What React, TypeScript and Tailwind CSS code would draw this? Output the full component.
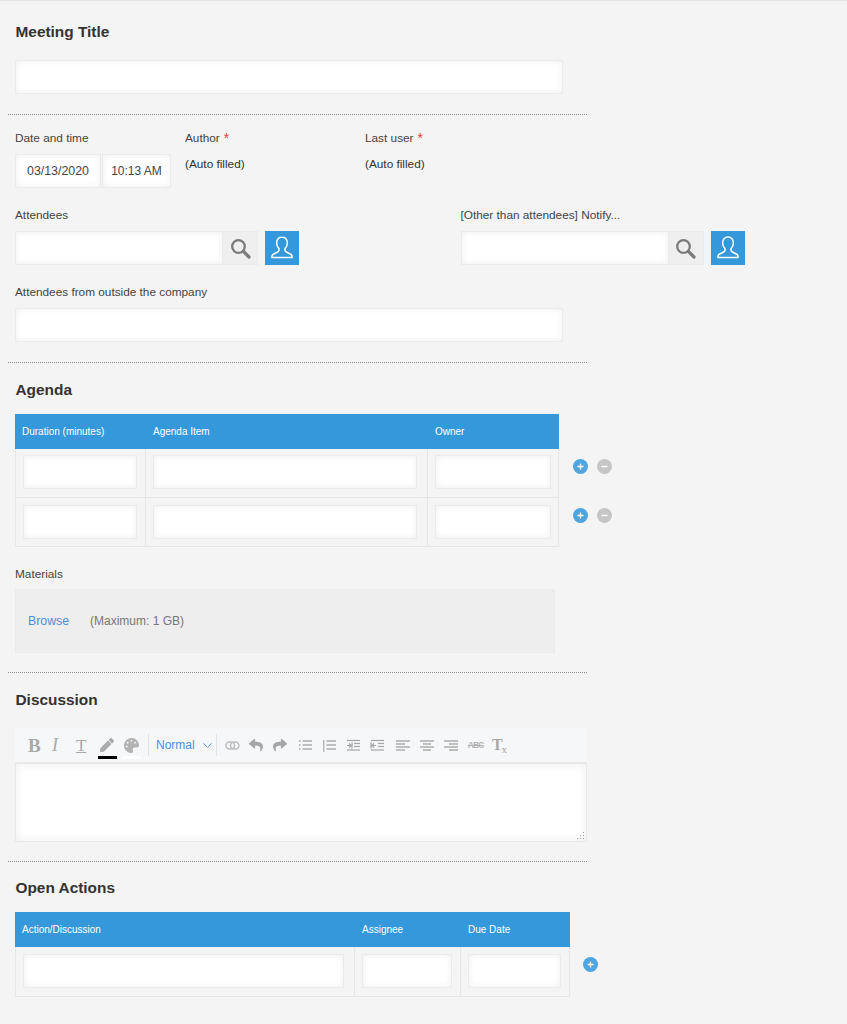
import React from "react";
import { FaPen, FaPalette, FaReply, FaShare, FaPlus, FaMinus } from "react-icons/fa";
import { ChevronDown } from "lucide-react";

const inputBox = "bg-white border border-[#ebebeb] shadow-[inset_0_0_6px_rgba(0,0,0,0.07)]";

const Divider = () => <div className="ml-2 w-[579px] border-t border-dotted border-[#8f8f8f]" />;

const Heading = ({ children, className }: { children: React.ReactNode; className: string }) => (
  <h2 className={`text-[15.4px] leading-[18px] font-bold text-[#333] ${className}`}>{children}</h2>
);

const Label = ({ children, required }: { children: React.ReactNode; required?: boolean }) => (
  <div className="text-[11.8px] leading-[16px] text-[#444]">
    {children}
    {required && <span className="ml-1 align-[-1px] text-[14px] leading-none text-[#ee3b3b]">*</span>}
  </div>
);

const UserButton = () => (
  <div className="ml-[7px] flex h-[34px] w-[34px] items-center justify-center bg-[#3498db]">
    <svg width="26" height="26" viewBox="0 0 26 26" fill="none" stroke="white" strokeWidth="1.5" strokeLinejoin="round">
      <path d="M13 2c-3.400 0-5.400 2.600-5.400 6 0 2.400 1 4.400 2.400 5.600v2.200c0 1-3.600 2-6 3.600-1 .7-1.200 1.800-1.200 3h20.400c0-1.200-.2-2.300-1.200-3-2.400-1.600-6-2.600-6-3.600v-2.200c1.400-1.200 2.400-3.200 2.400-5.600 0-3.400-2-6-5.400-6z" />
    </svg>
  </div>
);

const UserPicker = () => (
  <div className="flex h-[34px]">
    <div className={`${inputBox} h-full w-[208px]`} />
    <div className="flex h-full w-[35px] items-center justify-center border border-l-0 border-[#ebebeb] bg-[#efefef]">
      <svg width="21" height="21" viewBox="0 0 21 21" fill="none" stroke="#7b7b7b">
        <circle cx="8.500" cy="8.500" r="6.300" strokeWidth="2.300" />
        <line x1="13.500" y1="13.500" x2="19" y2="19" strokeWidth="3.200" strokeLinecap="round" />
      </svg>
    </div>
    <UserButton />
  </div>
);

const RoundButton = ({ kind }: { kind: "add" | "remove" }) => (
  <div
    className={`flex h-[15px] w-[15px] items-center justify-center rounded-full text-white ${
      kind === "add" ? "bg-[#4da6e2]" : "bg-[#c6c6c6]"
    }`}
  >
    {kind === "add" ? <FaPlus size={7} /> : <FaMinus size={7} />}
  </div>
);

const HeaderCell = ({ width, children }: { width: string; children: React.ReactNode }) => (
  <div className={`${width} pl-[7px] text-[10px] leading-[35px] text-white`}>{children}</div>
);

const FieldCell = ({ width, field, top, last }: { width: string; field: string; top?: string; last?: boolean }) => (
  <div className={`${width} ${top ?? "pt-[7px]"} h-full shrink-0 pl-[7px] ${last ? "" : "border-r border-[#e6e6e6]"}`}>
    <div className={`${inputBox} ${field} h-[34px]`} />
  </div>
);

const LineIcon = ({ lines }: { lines: number[][] }) => (
  <svg width="15" height="13" viewBox="0 0 15 13" stroke="#a6a6a6" strokeWidth="1.4">
    {lines.map(([x1, x2, y], i) => (
      <line key={i} x1={x1} x2={x2} y1={y} y2={y} />
    ))}
  </svg>
);

const IndentIcon = ({ out }: { out?: boolean }) => (
  <svg width="15" height="13" viewBox="0 0 15 13" stroke="#a6a6a6" strokeWidth="1.200" fill="none">
    <line x1="1" x2="14" y1="1.500" y2="1.500" />
    <line x1="8" x2="14" y1="4.500" y2="4.500" />
    <line x1="8" x2="14" y1="7.500" y2="7.500" />
    <line x1="1" x2="14" y1="11" y2="11" />
    {out ? <path d="M1 3.500v6M6 6.500H2M4 4.500l-2 2 2 2" /> : <path d="M6 3.500v6M1 6.500h4M3 4.500l2 2-2 2" />}
  </svg>
);

const ListIcon = ({ numbered }: { numbered?: boolean }) => (
  <svg width="15" height="13" viewBox="0 0 15 13" stroke="#a6a6a6" strokeWidth="1.400">
    {[2, 6, 10].map((y) => (
      <g key={y}>
        <line x1="4.500" x2="14" y1={y} y2={y} />
        <line x1="1" x2="2.500" y1={y} y2={y} />
        {numbered && <line x1="1" x2="2.500" y1={y + 2} y2={y + 2} />}
      </g>
    ))}
  </svg>
);

const LinkIcon = () => (
  <svg width="15" height="11" viewBox="0 0 15 11" fill="none" stroke="#bdbdbd" strokeWidth="1.500">
    <rect x="1" y="2" width="8.500" height="7" rx="3.500" />
    <rect x="5.500" y="2" width="8.500" height="7" rx="3.500" />
  </svg>
);

const ToolSlot = ({ children }: { children: React.ReactNode }) => (
  <div className="flex w-[24.300px] shrink-0 items-center">{children}</div>
);

const Toolbar = () => (
  <div className="flex h-[35px] items-center border-b border-[#e9e9e9] bg-[#f6f7f9] pl-[13px] text-[#a9a9a9]">
    <span className="w-[24px] font-['Liberation_Serif',serif] text-[19px] leading-none font-bold">B</span>
    <span className="w-[24px] font-['Liberation_Serif',serif] text-[18px] leading-none italic">I</span>
    <span className="w-[24px] font-['Liberation_Serif',serif] text-[17px] leading-none underline">T</span>
    <div className="relative flex h-full w-[24px] items-center">
      <FaPen size={14} color="#ababab" />
      <div className="absolute top-[28px] left-[-2px] h-[3px] w-[19px] bg-black" />
    </div>
    <div className="relative flex h-full w-[24px] items-center">
      <FaPalette size={15} color="#b3b3b3" />
      <div className="absolute top-[28px] left-[-2px] h-[3px] w-[19px] bg-white" />
    </div>
    <div className="mr-[7px] h-[22px] w-px bg-[#e3e3e3]" />
    <span className="text-[12px] text-[#4a90e2]">Normal</span>
    <ChevronDown size={15} strokeWidth={1.5} color="#4a90e2" className="ml-[5px]" />
    <div className="ml-[1px] h-[22px] w-px bg-[#e3e3e3]" />
    <div className="ml-[8px] flex items-center">
      <ToolSlot><LinkIcon /></ToolSlot>
      <ToolSlot><FaReply size={14} color="#a6a6a6" /></ToolSlot>
      <ToolSlot><FaShare size={14} color="#a6a6a6" /></ToolSlot>
      <ToolSlot><ListIcon /></ToolSlot>
      <ToolSlot><ListIcon numbered /></ToolSlot>
      <ToolSlot><IndentIcon /></ToolSlot>
      <ToolSlot><IndentIcon out /></ToolSlot>
      <ToolSlot><LineIcon lines={[[1, 15, 2], [1, 10, 5], [1, 15, 8], [1, 10, 11]]} /></ToolSlot>
      <ToolSlot><LineIcon lines={[[1, 15, 2], [4, 12, 5], [1, 15, 8], [4, 12, 11]]} /></ToolSlot>
      <ToolSlot><LineIcon lines={[[1, 15, 2], [6, 15, 5], [1, 15, 8], [6, 15, 11]]} /></ToolSlot>
      <ToolSlot>
        <span className="text-[8.500px] leading-none font-bold tracking-[-0.8px] text-[#b4b4b4] line-through">ABC</span>
      </ToolSlot>
      <ToolSlot>
        <span className="font-['Liberation_Serif',serif] text-[16px] leading-none font-bold text-[#a9a9a9]">
          T<sub className="-ml-px text-[11px] font-normal">x</sub>
        </span>
      </ToolSlot>
    </div>
  </div>
);

export default function App() {
  return (
    <div className="min-h-[1024px] border-t border-[#e4e4e4] bg-[#f4f4f4] font-['Liberation_Sans',Arial,sans-serif]">
      <Heading className="ml-[15.500px] pt-[22px]">Meeting Title</Heading>
      <div className={`${inputBox} mt-[19px] ml-[15px] h-[34px] w-[548px]`} />
      <div className="mt-[20px]">
        <Divider />
      </div>

      <div className="mt-[15px] ml-[15px] flex">
        <div className="w-[170px]">
          <Label>Date and time</Label>
          <div className="mt-2 flex h-[34px] gap-px">
            <div className={`${inputBox} flex w-[86px] items-center justify-center text-[12.400px] text-[#444]`}>03/13/2020</div>
            <div className={`${inputBox} flex w-[69px] items-center justify-center text-[12px] text-[#444]`}>10:13 AM</div>
          </div>
        </div>
        <div className="w-[180px]">
          <Label required>Author</Label>
          <div className="mt-[10px] text-[11.800px] leading-[16px] text-[#333]">(Auto filled)</div>
        </div>
        <div>
          <Label required>Last user</Label>
          <div className="mt-[10px] text-[11.800px] leading-[16px] text-[#333]">(Auto filled)</div>
        </div>
      </div>

      <div className="mt-[19px] ml-[15px] flex">
        <div className="w-[445.500px]">
          <Label>Attendees</Label>
          <div className="mt-2">
            <UserPicker />
          </div>
        </div>
        <div>
          <Label>[Other than attendees] Notify...</Label>
          <div className="mt-2">
            <UserPicker />
          </div>
        </div>
      </div>

      <div className="mt-[19px] ml-[15px]">
        <Label>Attendees from outside the company</Label>
        <div className={`${inputBox} mt-2 h-[34px] w-[548px]`} />
      </div>
      <div className="mt-[20px]">
        <Divider />
      </div>

      <Heading className="mt-[18px] ml-[15.500px]">Agenda</Heading>
      <div className="mt-[15px] ml-[15px] w-[544px] border border-t-0 border-[#e6e6e6]">
        <div className="-mx-px flex h-[35px] bg-[#3498db]">
          <HeaderCell width="w-[131px]">Duration (minutes)</HeaderCell>
          <HeaderCell width="w-[282px]">Agenda Item</HeaderCell>
          <HeaderCell width="w-[131px]">Owner</HeaderCell>
        </div>
        {[0, 1].map((row) => (
          <div key={row} className="relative flex h-[49px] border-b border-[#e6e6e6] last:h-[48px] last:border-b-0">
            <FieldCell width="w-[130px]" field="w-[114px]" top={row === 0 ? "pt-[6px]" : "pt-[7px]"} />
            <FieldCell width="w-[282px]" field="w-[264px]" top={row === 0 ? "pt-[6px]" : "pt-[7px]"} />
            <FieldCell width="w-[130px]" field="w-[116px]" top={row === 0 ? "pt-[6px]" : "pt-[7px]"} last />
            <div className="absolute top-[10px] left-[557px] flex gap-[9px]">
              <RoundButton kind="add" />
              <RoundButton kind="remove" />
            </div>
          </div>
        ))}
      </div>

      <div className="mt-[19px] ml-[15px]">
        <Label>Materials</Label>
        <div className="mt-[7px] flex h-[64px] w-[540px] items-center border border-[#ebebeb] bg-[#eeeeee] pl-3 text-[12px]">
          <span className="text-[12.300px] text-[#4a90d9]">Browse</span>
          <span className="ml-[21px] text-[#777]">(Maximum: 1 GB)</span>
        </div>
      </div>
      <div className="mt-[19px]">
        <Divider />
      </div>

      <Heading className="mt-[18px] ml-[15.500px]">Discussion</Heading>
      <div className="mt-[19px] ml-[15px] w-[572px]">
        <Toolbar />
        <div className="relative h-[79px] border border-[#e9e9e9] bg-white shadow-[inset_0_0_10px_rgba(0,0,0,0.07)]">
          <svg className="absolute right-[1px] bottom-[1px]" width="9" height="9" viewBox="0 0 9 9" fill="#999">
            <rect x="7" y="1" width="1" height="1" />
            <rect x="4" y="4" width="1" height="1" />
            <rect x="7" y="4" width="1" height="1" />
            <rect x="1" y="7" width="1" height="1" />
            <rect x="4" y="7" width="1" height="1" />
            <rect x="7" y="7" width="1" height="1" />
          </svg>
        </div>
      </div>
      <div className="mt-[19px]">
        <Divider />
      </div>

      <Heading className="mt-[17px] ml-[15.500px]">Open Actions</Heading>
      <div className="mt-[15px] ml-[15px] w-[555px] border border-t-0 border-[#e6e6e6]">
        <div className="-mx-px flex h-[35px] bg-[#3498db]">
          <HeaderCell width="w-[340px]">Action/Discussion</HeaderCell>
          <HeaderCell width="w-[106px]">Assignee</HeaderCell>
          <HeaderCell width="w-[109px]">Due Date</HeaderCell>
        </div>
        <div className="relative flex h-[49px]">
          <FieldCell width="w-[339px]" field="w-[321px]" />
          <FieldCell width="w-[106px]" field="w-[90px]" />
          <FieldCell width="w-[108px]" field="w-[93px]" last />
          <div className="absolute top-[10px] left-[567px]">
            <RoundButton kind="add" />
          </div>
        </div>
      </div>
    </div>
  );
}
